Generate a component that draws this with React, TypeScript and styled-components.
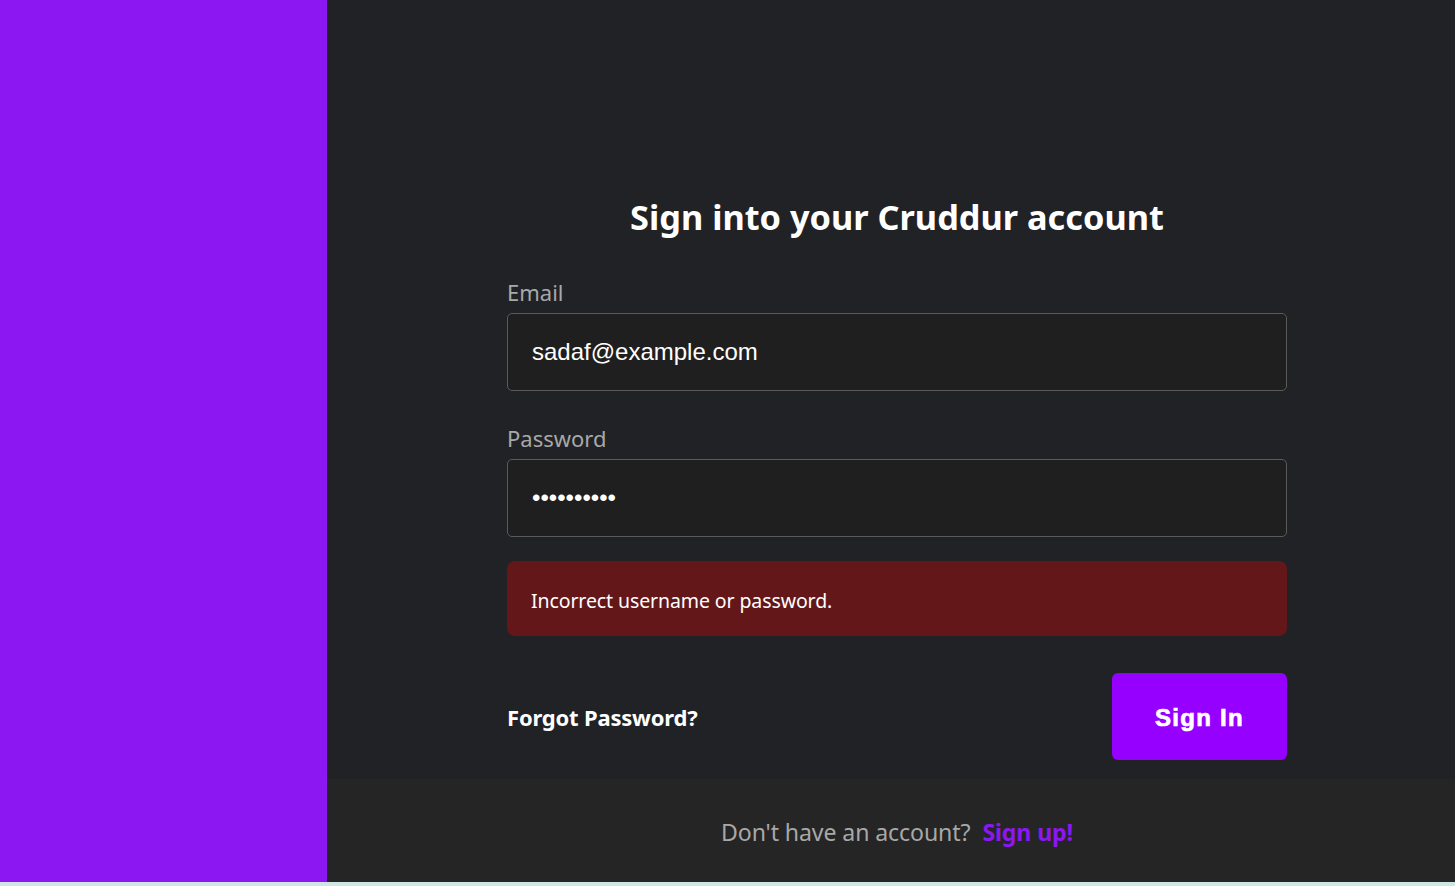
import React from "react";
import styled, { createGlobalStyle } from "styled-components";

const Global = createGlobalStyle`
  html, body { margin: 0; padding: 0; background: #cfe5e6; }
  body { font-family: "Noto Sans", "Open Sans", sans-serif; }
  * { box-sizing: border-box; }
`;

const Page = styled.div`
  display: flex;
  height: 882px;
  width: 1455px;
`;

const SideBar = styled.div`
  width: 327px;
  flex: none;
  background: #8c17f2;
`;

const Panel = styled.div`
  flex: 1;
  display: flex;
  flex-direction: column;
  background: #212226;
`;

const Main = styled.div`
  height: 779px;
  padding-left: 12px;
  display: flex;
  justify-content: center;
  padding-top: 194px;
`;

const Form = styled.form`
  width: 780px;
  display: flex;
  flex-direction: column;
`;

const Title = styled.h1`
  margin: 0 0 29px;
  text-align: center;
  font-size: 34.3px;
  font-weight: 700;
  line-height: 46px;
  color: #ffffff;
`;

const Field = styled.div`
  display: flex;
  flex-direction: column;
  margin-bottom: 24px;
`;

const Label = styled.label`
  font-size: 22px;
  line-height: 30px;
  color: #a8a8a8;
  margin: 8px 0 6px;
`;

const Input = styled.input`
  height: 78px;
  border: 1px solid #5a5a5a;
  border-radius: 5px;
  background: #1f1f1f;
  color: #ffffff;
  font-family: "Liberation Sans", Arial, sans-serif;
  font-size: 24px;
  padding: 0 24px;
  outline: none;
`;

const ErrorBox = styled.div`
  height: 75px;
  border-radius: 8px;
  background: #641719;
  color: #ffffff;
  font-size: 19.5px;
  display: flex;
  align-items: center;
  padding: 3px 24px 0;
  letter-spacing: -0.1px;
`;

const Actions = styled.div`
  display: flex;
  justify-content: space-between;
  align-items: center;
  margin-top: 37px;
`;

const Forgot = styled.a`
  color: #ffffff;
  font-weight: 700;
  font-size: 22px;
  text-decoration: none;
  letter-spacing: -0.2px;
`;

const SubmitButton = styled.button`
  width: 175px;
  height: 87px;
  border: none;
  border-radius: 6px;
  background: #9500ff;
  color: #ffffff;
  font-family: "Liberation Sans", Arial, sans-serif;
  font-weight: 700;
  font-size: 24px;
  letter-spacing: 1.3px;
  -webkit-text-stroke: 0.7px #ffffff;
  padding-top: 4px;
`;

const Footer = styled.div`
  flex: 1;
  background: #252525;
  display: flex;
  align-items: center;
  justify-content: center;
  padding: 2px 0 0 12px;
  font-size: 23.1px;
  color: #a8a8a8;
  letter-spacing: -0.1px;
`;

const SignUp = styled.a`
  color: #8c17f2;
  font-weight: 700;
  text-decoration: none;
  margin-left: 12px;
`;

export default function App() {
  return (
    <>
      <Global />
      <Page>
        <SideBar />
        <Panel>
          <Main>
            <Form onSubmit={(e) => e.preventDefault()}>
              <Title>Sign into your Cruddur account</Title>
              <Field>
                <Label>Email</Label>
                <Input type="text" defaultValue="sadaf@example.com" />
              </Field>
              <Field>
                <Label>Password</Label>
                <Input type="password" defaultValue="0123456789" />
              </Field>
              <ErrorBox>Incorrect username or password.</ErrorBox>
              <Actions>
                <Forgot href="#">Forgot Password?</Forgot>
                <SubmitButton type="submit">Sign In</SubmitButton>
              </Actions>
            </Form>
          </Main>
          <Footer>
            <span>Don't have an account?</span>
            <SignUp href="#">Sign up!</SignUp>
          </Footer>
        </Panel>
      </Page>
    </>
  );
}
